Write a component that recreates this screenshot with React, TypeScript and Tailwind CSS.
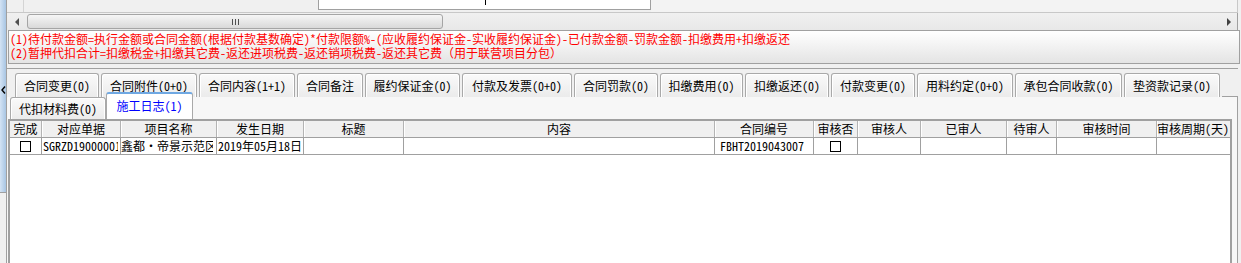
import React from "react";

const tabs1: { label: string; w: string }[] = [
  { label: "合同变更(0)", w: "w-[84px]" },
  { label: "合同附件(0+0)", w: "w-[96px]" },
  { label: "合同内容(1+1)", w: "w-[96px]" },
  { label: "合同备注", w: "w-[66px]" },
  { label: "履约保证金(0)", w: "w-[95px]" },
  { label: "付款及发票(0+0)", w: "w-[110px]" },
  { label: "合同罚款(0)", w: "w-[84px]" },
  { label: "扣缴费用(0)", w: "w-[83px]" },
  { label: "扣缴返还(0)", w: "w-[84px]" },
  { label: "付款变更(0)", w: "w-[84px]" },
  { label: "用料约定(0+0)", w: "w-[96px]" },
  { label: "承包合同收款(0)", w: "w-[107px]" },
  { label: "垫资款记录(0)", w: "w-[96px]" },
];

const cols: { label: string; w: string }[] = [
  { label: "完成", w: "w-[32px]" },
  { label: "对应单据", w: "w-[79px]" },
  { label: "项目名称", w: "w-[96px]" },
  { label: "发生日期", w: "w-[87px]" },
  { label: "标题", w: "w-[100px]" },
  { label: "内容", w: "w-[311px]" },
  { label: "合同编号", w: "w-[99px]" },
  { label: "审核否", w: "w-[44px]" },
  { label: "审核人", w: "w-[63px]" },
  { label: "已审人", w: "w-[86px]" },
  { label: "待审人", w: "w-[50px]" },
  { label: "审核时间", w: "w-[100px]" },
  { label: "审核周期(天)", w: "w-[72px]" },
];

function CheckBox() {
  return <div className="w-[11px] h-[11px] border border-black bg-white" />;
}

export default function App() {
  const cells: React.ReactNode[] = [
    <CheckBox />,
    <span className="block w-[75px] overflow-hidden whitespace-nowrap">SGRZD190000012</span>,
    <span className="block w-[92px] overflow-hidden whitespace-nowrap">鑫都・帝景示范区项目</span>,
    "2019年05月18日",
    "",
    "",
    "FBHT2019043007",
    <CheckBox />,
    "",
    "",
    "",
    "",
    "",
  ];
  const cellCls = [
    "justify-center",
    "pl-[1px]",
    "pl-0",
    "pl-[1px]",
    "",
    "",
    "pl-[5px]",
    "justify-center",
    "",
    "",
    "",
    "",
    "",
  ];

  return (
    <div className="w-[1241px] h-[263px] overflow-hidden bg-[#f0f0f0] flex text-[12px] leading-[12px] text-black font-['Noto_Sans_Mono_CJK_SC','Noto_Sans_CJK_SC',sans-serif]">
      {/* left splitter strip */}
      <div className="w-[7px] shrink-0 flex flex-col border-r border-[#a0a0a0]">
        <div className="h-[192px] bg-gradient-to-r from-[#d3e3f4] to-[#a8c5e3] pt-[86px] pl-[1px]">
          <svg width="5" height="8" viewBox="0 0 5 8">
            <polyline points="4,0.5 1,4 4,7.5" fill="none" stroke="#000" strokeWidth="1.4" />
          </svg>
        </div>
        <div className="flex-1 bg-[#f0f0f0] border-t border-[#a0a0a0]" />
      </div>

      {/* main */}
      <div className="flex-1 flex flex-col min-w-0">
        {/* top strip */}
        <div className="h-[13px] shrink-0 w-[1231px] flex border-b border-r border-[#c8c8c8]">
          <div className="w-[16px]" />
          <div className="w-[295px] border-l border-[#d4d4d4]" />
          <div className="relative w-[333px] h-[10px] bg-white border-l border-r border-b border-[#a0a0a0]">
            <div className="absolute left-[166px] top-0 w-px h-[5px] bg-black" />
          </div>
          <div className="flex-1 bg-[#f3f3f3]" />
        </div>

        {/* horizontal scrollbar */}
        <div className="h-[17px] shrink-0 w-[1231px] flex items-center border-r border-[#a0a0a0] bg-gradient-to-b from-[#f0f0f0] to-[#e8e8e8]">
          <div className="w-[20px] pl-[8px] flex items-center">
            <div className="w-0 h-0 border-y-[4px] border-y-transparent border-r-[4px] border-r-[#505050]" />
          </div>
          <div className="w-[416px] h-[15px] rounded-[3px] border border-[#a5a5a5] bg-gradient-to-b from-[#f6f6f6] to-[#d9d9d9] flex items-center justify-center gap-[2px]">
            <div className="w-px h-[6px] bg-[#505050]" />
            <div className="w-px h-[6px] bg-[#505050]" />
            <div className="w-px h-[6px] bg-[#505050]" />
          </div>
          <div className="flex-1" />
          <div className="w-0 h-0 border-y-[4px] border-y-transparent border-l-[4px] border-l-[#404040] mr-[6px]" />
        </div>

        {/* formula notes */}
        <div className="h-[34px] shrink-0 ml-[1px] w-[1232px] border border-[#a0a0a0] bg-gradient-to-b from-white to-[#e4e4e4] text-[#ff0000] pl-[1px] pt-[2px] whitespace-nowrap flex flex-col gap-[2px]">
          <div className="leading-[12px]">(1)待付款金额=执行金额或合同金额(根据付款基数确定)*付款限额%-(应收履约保证金-实收履约保证金)-已付款金额-罚款金额-扣缴费用+扣缴返还</div>
          <div className="leading-[12px]">(2)暂押代扣合计=扣缴税金+扣缴其它费-返还进项税费-返还销项税费-返还其它费（用于联营项目分包）</div>
        </div>

        <div className="mt-[4px] shrink-0 w-[1231px] border-t border-[#a0a0a0]" />

        {/* tab row 1 */}
        <div className="mt-[4px] h-[24px] shrink-0 w-[1231px] flex items-end gap-[2px] pl-[8px]">
          {tabs1.map((t) => (
            <div
              key={t.label}
              className={`${t.w} h-[24px] shrink-0 flex items-center justify-center whitespace-nowrap border border-b-0 border-[#a9a9a9] rounded-t-[3px] bg-gradient-to-b from-[#fafafa] to-[#ebebeb] shadow-[inset_1px_1px_0_#ffffff,inset_-1px_0_0_#ffffff]`}
            >
              {t.label}
            </div>
          ))}
          <div className="flex-1 h-px bg-[#a0a0a0]" />
        </div>

        {/* panel */}
        <div className="flex-1 w-[1231px] flex flex-col border-r border-[#a0a0a0] bg-[#f7f7f7] min-h-0">
          {/* tab row 2 */}
          <div className="h-[22px] shrink-0 flex items-end pl-[3px]">
            <div className="w-[96px] h-[22px] shrink-0 flex items-center justify-center whitespace-nowrap border border-b-0 border-[#a9a9a9] rounded-t-[3px] bg-gradient-to-b from-[#fafafa] to-[#ebebeb] shadow-[inset_1px_1px_0_#ffffff,inset_-1px_0_0_#ffffff]">
              代扣材料费(0)
            </div>
            <div className="relative z-10 w-[87px] h-[27px] shrink-0 flex items-center justify-center whitespace-nowrap border border-b-0 border-[#a9a9a9] border-t-2 border-t-[#6fa8e2] rounded-t-[3px] bg-white text-[#0000ff] pb-[2px]">
              施工日志(1)
            </div>
          </div>

          {/* grid */}
          <div className="flex-1 ml-[1px] w-[1224px] border-l-2 border-t-2 border-r-2 border-[#a0a0a0] bg-white flex flex-col overflow-hidden">
            <div className="h-[17px] shrink-0 flex bg-[#f0f0f0] border-b border-[#a0a0a0]">
              {cols.map((c, i) => (
                <div
                  key={c.label}
                  className={`${c.w} shrink-0 overflow-hidden whitespace-nowrap text-center leading-[16px] ${i < cols.length - 1 ? "border-r border-[#b4b4b4] shadow-[1px_0_0_#ffffff]" : ""}`}
                >
                  {c.label}
                </div>
              ))}
            </div>
            <div className="h-[17px] shrink-0 flex border-b border-[#a0a0a0]">
              {cols.map((c, i) => (
                <div
                  key={c.label}
                  className={`${c.w} shrink-0 overflow-hidden whitespace-nowrap flex items-center ${cellCls[i]} ${i < cols.length - 1 ? "border-r border-[#a0a0a0]" : ""}`}
                >
                  {cells[i]}
                </div>
              ))}
            </div>
            <div className="flex-1 bg-white" />
          </div>
        </div>
      </div>
    </div>
  );
}
